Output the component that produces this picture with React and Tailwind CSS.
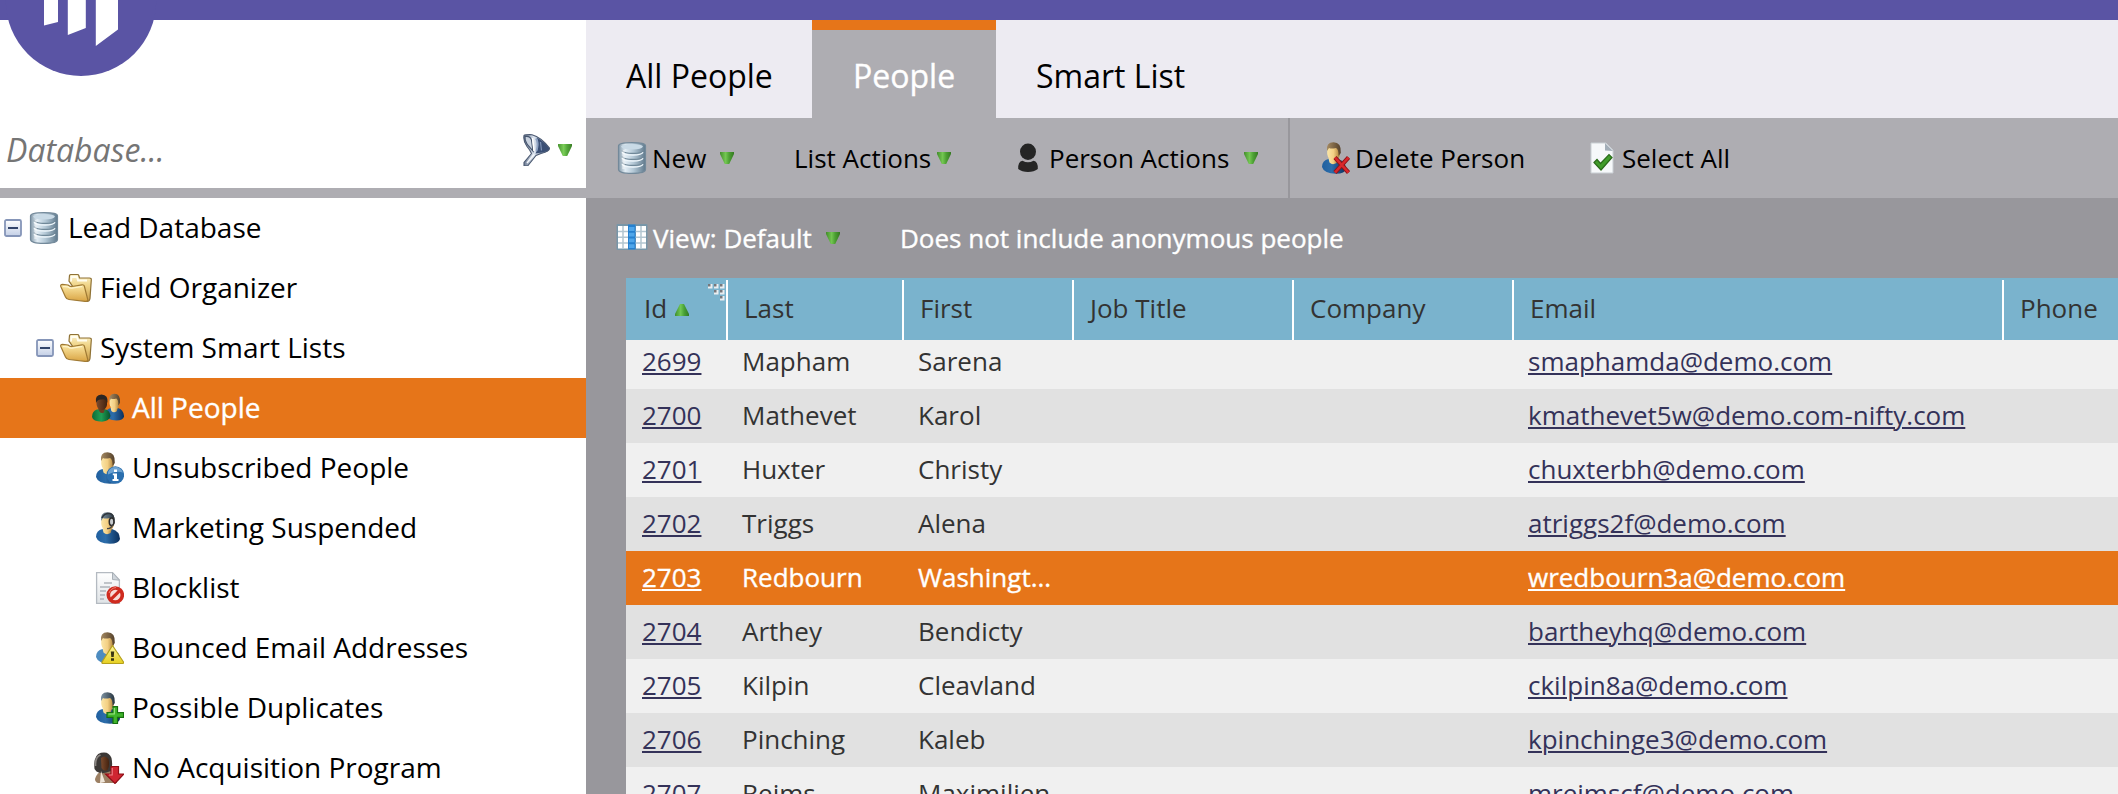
import React from "react";

/* ---------- gradients shared by every icon ---------- */
function Gradients() {
  const lin = (id, stops, v) => (
    <linearGradient id={id} x1="0" y1="0" x2={v ? "0" : "1"} y2={v ? "1" : "0"}>
      {stops.map(([o, c]) => (
        <stop key={o} offset={o} stopColor={c} />
      ))}
    </linearGradient>
  );
  return (
    <svg className="absolute h-0 w-0" aria-hidden="true">
      <defs>
        {lin("gSteel", [[0, "#8297a7"], [0.25, "#e2edf5"], [0.55, "#b4c8d6"], [1, "#5f798c"]])}
        {lin("gGreen", [[0, "#3a8c20"], [0.4, "#6fc94a"], [0.65, "#45a029"], [1, "#2b7515"]])}
        {lin("gBox", [[0, "#ffffff"], [1, "#c3cfe6"]], true)}
        {lin("gFolder", [[0, "#fdeba8"], [1, "#d9a443"]], true)}
        {lin("gFolderBack", [[0, "#fbf1cb"], [0.4, "#f0d588"], [1, "#c99a45"]], true)}
        {lin("gBlue", [[0, "#1f5f9f"], [0.4, "#2c6daa"], [1, "#0b2f5c"]])}
        {lin("gEmerald", [[0, "#0c6a36"], [0.5, "#1fa055"], [1, "#07502a"]])}
        {lin("gSkin", [[0, "#fbe6a8"], [0.5, "#f3cf83"], [1, "#a97c35"]])}
        {lin("gBrown", [[0, "#7c4a2c"], [1, "#43220f"]])}
        {lin("gHair", [[0, "#a58a62"], [1, "#54402a"]])}
        {lin("gHairGrey", [[0, "#8095a4"], [1, "#26333e"]])}
        {lin("gFunnel", [[0, "#6b7a92"], [0.4, "#dfe7f2"], [1, "#3b4f73"]])}
        {lin("gPage", [[0, "#ffffff"], [1, "#dfe3e6"]], true)}
        {lin("gYellow", [[0, "#fdf6a0"], [1, "#e6cf1f"]], true)}
      </defs>
    </svg>
  );
}

/* ---------- icons ---------- */
function Icon({ children, className = "h-8 w-8" }) {
  return (
    <svg viewBox="0 0 32 32" className={"shrink-0 " + className} aria-hidden="true">
      {children}
    </svg>
  );
}

function DatabaseIcon() {
  return (
    <Icon>
      <path d="M2.500 4Q2.500 0.600 16 0.600T29.500 4V27.500Q29.500 31.400 16 31.400T2.500 27.500Z" fill="url(#gSteel)" stroke="#73899a" strokeWidth="1.200" />
      <path d="M5 4.500Q6 2 16 2T27 4.500Q26 7.500 16 7.500T5 4.500Z" fill="#c9dae6" />
      {[8.500, 14.500, 20.500].map((y) => (
        <g key={y} fill="none">
          <path d={`M6 ${y}Q8 ${y + 3} 17 ${y + 3}T28 ${y}`} stroke="#708898" strokeWidth="1.300" />
          <path d={`M6 ${y + 1.6}Q8 ${y + 4.500} 17 ${y + 4.500}T27 ${y + 1.8}`} stroke="#eef6fb" strokeWidth="1.300" />
        </g>
      ))}
      <path d="M7.500 8V27" stroke="#fff" strokeOpacity=".5" strokeWidth="2.500" />
    </Icon>
  );
}

function FolderIcon() {
  return (
    <Icon>
      <path d="M9 9L9.500 3.500Q9.800 2.500 11 2.500H17.500Q18.500 2.500 18.800 3.500L19.500 6H29.500Q31.500 6 31.300 8L30 26.500Q29.500 29.500 27 29.500L22 28Z" fill="url(#gFolderBack)" stroke="#8f7236" strokeWidth="1.200" />
      <path d="M11 9.500L11.500 5H17L18 8.500H27" stroke="#fffdf0" strokeWidth="1.800" fill="none" />
      <path d="M0.800 14.500Q0.300 12.300 2.500 12.300L8 13Q10 15 12 14.500L22 12.800Q23.800 12.500 24.300 14L28 28.500Q27 29.500 25 29.300L9 27.500Q6.500 27.300 5.500 25Z" fill="url(#gFolder)" stroke="#a07a34" strokeWidth="1.200" />
      <path d="M3 14.500L8 14.800Q10 16.500 12 16.100L22 14.500" stroke="#fff6cf" strokeWidth="1.200" fill="none" />
    </Icon>
  );
}

function Person({ hair = "url(#gHair)", skin = "url(#gSkin)", body = "url(#gBlue)" }) {
  return (
    <g>
      <path d="M4 25Q4 18.500 10.500 17L20 17Q27.500 19 28 27Q27 31.600 18 31.800Q6 31.500 4 25Z" fill={body} />
      <path d="M10.500 16.500L20 16.500L18.500 21Q14.500 23.500 11.500 20.500Z" fill={skin} />
      <path d="M9.200 8Q9 3 15 3T22 8V12Q21 18.500 16 19Q10 18 9.200 12Z" fill={skin} />
      <path d="M9 9Q7.800 0.300 15.500 0.200Q23.500 0.200 22.800 11L20.500 14Q20.800 7.500 18 6Q13 7.200 11 6Z" fill={hair} />
    </g>
  );
}

function PeopleIcon() {
  return (
    <Icon>
      <g transform="translate(10.500 1.500) scale(.77 .85)">
        <Person />
      </g>
      <path d="M0 25Q0 19 5 17.500L12 17Q18 18 18.500 24Q17.500 29 10 29.700Q1 29.500 0 25Z" fill="url(#gEmerald)" />
      <path d="M6 16.500L13 16L12 20.500Q9 22 7.500 19.500Z" fill="#6b3d22" />
      <path d="M4.500 9Q4.500 4 9.500 4T15 9V13Q14 18 9.500 18.300Q5 17.500 4.500 12Z" fill="url(#gBrown)" />
      <path d="M4 11Q2.500 3 9.500 2.600Q16.500 3 15.500 11Q14 6.500 9.500 7.500Q5.500 7 4 11Z" fill="#2a2624" />
    </Icon>
  );
}

function UnsubscribedIcon() {
  return (
    <Icon>
      <Person />
      <circle cx="23.300" cy="23" r="8.800" fill="#2b6fae" />
      <path d="M16 20Q18.500 15 23.500 15T31 20.500Q23 18.500 16 22.500Z" fill="#7fb0da" fillOpacity=".8" />
      <path d="M22 17.500H25V20H22ZM20.800 21.500H25V27H26.500V29H20.500V27H22V23.300H20.800Z" fill="#fff" />
    </Icon>
  );
}

function SuspendedIcon() {
  return (
    <Icon>
      <Person hair="url(#gHairGrey)" />
      <path d="M10 6Q12 1 18 1.500Q22 3 21.500 8" stroke="#30373d" strokeWidth="1.600" fill="none" />
      <ellipse cx="19.600" cy="9.800" rx="2.300" ry="3.800" fill="#c9cdd0" stroke="#2b2b2b" strokeWidth="1.500" />
      <path d="M20.500 13Q19 17 15 16.500" stroke="#444" strokeWidth="1.300" fill="none" />
    </Icon>
  );
}

function PageShape() {
  return (
    <g>
      <path d="M4.600 0.600H20.500L27.400 8V31.400H4.600Z" fill="url(#gPage)" stroke="#b4bac1" strokeWidth="1.300" />
      <path d="M20.500 0.600V7.500L27.400 8.200Z" fill="#cfd5db" stroke="#a9b0b7" strokeWidth="1" />
    </g>
  );
}

function BlocklistIcon() {
  return (
    <Icon>
      <PageShape />
      <path d="M12 11H20M8 15H18M8 19H14M8 23H13M8 27H12" stroke="#aeb4ba" strokeWidth="1.400" />
      <circle cx="23.300" cy="23" r="7" fill="#f7dcd8" stroke="#cf2b1f" strokeWidth="3.600" />
      <path d="M18.600 27.700L28 18.300" stroke="#cf2b1f" strokeWidth="3.200" />
      <path d="M17 21Q19 16 24 15.500" stroke="#ee7d70" strokeWidth="1" fill="none" />
    </Icon>
  );
}

function BouncedIcon() {
  return (
    <Icon>
      <Person body="#4d8cc0" />
      <path d="M20.500 13.500L31.500 30Q31.800 31.500 30.500 31.500H11Q9.600 31.500 10 30Z" fill="url(#gYellow)" stroke="#b5a01c" strokeWidth="1.200" strokeLinejoin="round" />
      <path d="M18.800 19.500H22.200L21.700 25H19.300ZM19 26.300H22V28.800H19Z" fill="#3a3713" />
    </Icon>
  );
}

function DuplicatesIcon() {
  return (
    <Icon>
      <Person hair="url(#gHairGrey)" />
      <path d="M21 14.600H25.500V20.700H31.500V25.300H25.500V31.500H21V25.300H15V20.700H21Z" fill="#3fb52b" stroke="#17700f" strokeWidth="1.200" />
      <path d="M22.300 16V22H16.500" stroke="#9be886" strokeWidth="1.100" fill="none" />
    </Icon>
  );
}

function NoAcquisitionIcon() {
  return (
    <Icon>
      <path d="M3 27Q5 20 11 19L20 19Q25 22 25 31H6Q3 30 3 27Z" fill="#9c8064" />
      <path d="M2.500 17Q1 3 9 0.800Q17 -1 19.500 6Q21 14 19 19Q10 23 4.500 19.500Z" fill="#3c3836" />
      <path d="M9 6Q13 2.500 16.500 7Q18 14 15.500 18Q12 20 9.500 16Z" fill="url(#gBrown)" />
      <path d="M3.500 14Q3 5 8.500 3" stroke="#8b8683" strokeWidth="1.800" fill="none" />
      <path d="M9 19L13 30L8 31Z" fill="#efe6da" />
      <path d="M19 14.500H26.500V22H32L23 31.500L13.500 22H19Z" fill="#cf2631" stroke="#8f0f17" strokeWidth="1.200" />
      <path d="M20.200 16V23H17" stroke="#f08288" strokeWidth="1.100" fill="none" />
    </Icon>
  );
}

function DeletePersonIcon() {
  return (
    <Icon>
      <Person />
      <path d="M17 15.500L30.500 30.500M30.500 15.500L17 30.500" stroke="#8d1318" strokeWidth="4.200" />
      <path d="M17 15.500L30.500 30.500M30.500 15.500L17 30.500" stroke="#d9272b" strokeWidth="2.600" />
    </Icon>
  );
}

function SelectAllIcon() {
  return (
    <Icon>
      <path d="M5 1H20L27 8V31H5Z" fill="#f6f8fa" stroke="#c9cfd4" strokeWidth="1" />
      <path d="M19 1V8.500L27 9Z" fill="#a3aeb8" />
      <path d="M8 20.500L11 17.500L14.500 21.500L23 12.500L26 15.500L15 28Z" fill="#419c2b" stroke="#2a6b1a" strokeWidth="1.200" />
    </Icon>
  );
}

function SilhouetteIcon() {
  return (
    <Icon>
      <ellipse cx="16" cy="9.800" rx="8" ry="8.200" fill="#252525" />
      <path d="M6.200 27Q5.800 19.500 10.500 18.700Q16 22 21.500 18.700Q26.200 19.500 25.800 27Q22 30 16 30T6.200 27Z" fill="#252525" />
    </Icon>
  );
}

function ColumnsIcon() {
  return (
    <Icon>
      <rect x="0.500" y="2" width="31" height="26" rx="1" fill="#7896a8" />
      <path d="M2 4H12V26.500H2ZM20 4H30V26.500H20Z" fill="#ffffff" />
      <path d="M2 9.500H30M2 15.300H30M2 21H30M7 4V26.500M25 4V26.500" stroke="#b3c6d1" strokeWidth="1.500" />
      <rect x="12" y="2.500" width="7.500" height="25" fill="#2580cf" />
      <path d="M13 5H18.500V9H13ZM13 10.800H18.500V14.500H13ZM13 16.500H18.500V20.200H13ZM13 22.200H18.500V26H13Z" fill="#4fa6ea" />
    </Icon>
  );
}

function FunnelIcon() {
  return (
    <Icon>
      <path d="M5 1.500Q6 0.500 13 0.700Q22 3 30.500 14Q31 17.500 22 19.500L17 21.500L9 31.500L5 31.800L5 28.500L12.500 19.500Q11 16 8 12.500Q4 7 5 1.500Z" fill="url(#gFunnel)" stroke="#4a5870" strokeWidth="1.100" />
      <path d="M18 3.500Q25.500 8 30 14.500Q29 17 23 18.500L16.500 19.500Q21 12 18 3.500Z" fill="#3a4f75" />
      <path d="M17 4.500Q20 9 17.500 17" stroke="#8fa3c4" strokeWidth="1.800" fill="none" />
      <path d="M21.500 8L22.500 16.500" stroke="#7d92b5" strokeWidth="1.200" fill="none" />
      <path d="M6 2.500Q11 1.500 12.500 6L14 17Q9.500 12 7.800 9.500Q5.500 6 6 2.500Z" fill="#c9d2df" stroke="#46566f" strokeWidth="1.200" />
      <path d="M13.500 4L15 17" stroke="#ffffff" strokeWidth="1.500" />
      <path d="M8 29L15 20.500" stroke="#f3f6fa" strokeWidth="1.400" />
    </Icon>
  );
}

function Caret({ up = false }) {
  return (
    <svg viewBox="0 0 14 12" className="h-3 w-3.5 shrink-0" aria-hidden="true">
      {up ? (
        <path d="M5 0H9L14 10V12H0V10Z" fill="url(#gGreen)" fillOpacity=".92" />
      ) : (
        <path d="M0 0H14V2L9.200 12H4.800L0 2Z" fill="url(#gGreen)" fillOpacity=".92" />
      )}
    </svg>
  );
}

function Toggle() {
  return (
    <svg viewBox="0 0 18 18" className="h-[18px] w-[18px] shrink-0" aria-hidden="true">
      <rect x="1" y="1" width="16" height="16" rx="1.500" fill="url(#gBox)" stroke="#8595b8" strokeWidth="1.800" />
      <path d="M4 9H14" stroke="#33456b" strokeWidth="2" />
    </svg>
  );
}

function Logo() {
  return (
    <svg viewBox="0 0 160 80" className="absolute left-0 top-0 h-20 w-40" aria-hidden="true">
      <circle cx="81" cy="0.800" r="75.200" fill="#5a54a4" />
      <path d="M44 0H58V22L44 25.600ZM67.800 0H85.800V28L67.800 35ZM95.800 0H118V29.500L95.800 46Z" fill="#fff" />
    </svg>
  );
}

/* ---------- data ---------- */
const tree = [
  { label: "Lead Database", icon: DatabaseIcon, pad: "pl-1", toggle: true },
  { label: "Field Organizer", icon: FolderIcon, pad: "pl-[60px]" },
  { label: "System Smart Lists", icon: FolderIcon, pad: "pl-9", toggle: true },
  { label: "All People", icon: PeopleIcon, pad: "pl-[92px]", active: true },
  { label: "Unsubscribed People", icon: UnsubscribedIcon, pad: "pl-[92px]" },
  { label: "Marketing Suspended", icon: SuspendedIcon, pad: "pl-[92px]" },
  { label: "Blocklist", icon: BlocklistIcon, pad: "pl-[92px]" },
  { label: "Bounced Email Addresses", icon: BouncedIcon, pad: "pl-[92px]" },
  { label: "Possible Duplicates", icon: DuplicatesIcon, pad: "pl-[92px]" },
  { label: "No Acquisition Program", icon: NoAcquisitionIcon, pad: "pl-[92px]" },
];

const rows = [
  ["2699", "Mapham", "Sarena", "smaphamda@demo.com"],
  ["2700", "Mathevet", "Karol", "kmathevet5w@demo.com-nifty.com"],
  ["2701", "Huxter", "Christy", "chuxterbh@demo.com"],
  ["2702", "Triggs", "Alena", "atriggs2f@demo.com"],
  ["2703", "Redbourn", "Washingt...", "wredbourn3a@demo.com"],
  ["2704", "Arthey", "Bendicty", "bartheyhq@demo.com"],
  ["2705", "Kilpin", "Cleavland", "ckilpin8a@demo.com"],
  ["2706", "Pinching", "Kaleb", "kpinchinge3@demo.com"],
  ["2707", "Reims", "Maximilien", "mreimscf@demo.com"],
];

const gridCols = "grid grid-cols-[102px_176px_170px_220px_220px_490px_1fr]";
const whiteText = "text-white [-webkit-text-stroke:0.35px_white]";

/* ---------- sections ---------- */
function Sidebar() {
  return (
    <aside className="flex w-[586px] shrink-0 flex-col bg-white">
      <div className="flex h-[168px] shrink-0 items-end pb-[18px] pl-1.5 pr-3.5">
        <span className="grow text-[32px] italic leading-[40px] text-[#757575]">Database...</span>
        <span className="flex h-10 items-center gap-[7px]">
          <FunnelIcon />
          <Caret />
        </span>
      </div>
      <div className="h-2.5 shrink-0 bg-[#aeadb2]" />
      <ul>
        {tree.map(({ label, icon: I, pad, toggle, active }) => (
          <li
            key={label}
            className={`flex h-[60px] items-center whitespace-nowrap text-[28px] leading-none ${pad} ${
              active ? `bg-[#e67519] ${whiteText}` : "text-black"
            }`}
          >
            {toggle && (
              <span className="mr-1.5">
                <Toggle />
              </span>
            )}
            <I />
            <span className="pb-0.5 pl-2">{label}</span>
          </li>
        ))}
      </ul>
    </aside>
  );
}

function Tabs() {
  return (
    <nav className="flex h-[98px] shrink-0 bg-[#edebf2] text-[32px] leading-[44px]">
      <span className="w-[226px] pl-10 pt-[34px]">All People</span>
      <span className={`w-[184px] border-t-10 border-[#e67519] bg-[#aeadb2] pl-[41px] pt-6 ${whiteText}`}>People</span>
      <span className="pl-10 pt-[34px]">Smart List</span>
    </nav>
  );
}

function Toolbar() {
  return (
    <div className="flex h-20 shrink-0 items-center whitespace-nowrap bg-[#aeadb2] text-[26px] leading-[36px]">
      <div className="flex h-full w-[704px] shrink-0 items-center border-r-2 border-[#98979c] pl-[30px]">
        <div className="flex w-[178px] items-center">
          <DatabaseIcon />
          <span className="pl-1">New</span>
          <span className="ml-3.5">
            <Caret />
          </span>
        </div>
        <div className="flex w-[218px] items-center">
          <span>List Actions</span>
          <span className="ml-1.5">
            <Caret />
          </span>
        </div>
        <div className="flex items-center">
          <SilhouetteIcon />
          <span className="pl-[5px]">Person Actions</span>
          <span className="ml-[15px]">
            <Caret />
          </span>
        </div>
      </div>
      <div className="flex w-[268px] items-center pl-7">
        <DeletePersonIcon />
        <span className="pl-[5px]">Delete Person</span>
      </div>
      <div className="flex items-center pl-7">
        <SelectAllIcon />
        <span className="pl-1">Select All</span>
      </div>
    </div>
  );
}

function ViewBar() {
  return (
    <div className={`flex h-20 shrink-0 items-center whitespace-nowrap pl-[30px] text-[26px] leading-[36px] ${whiteText}`}>
      <div className="flex w-[284px] items-center">
        <ColumnsIcon />
        <span className="pl-[5px]">View: Default</span>
        <span className="ml-3.5">
          <Caret />
        </span>
      </div>
      <span>Does not include anonymous people</span>
    </div>
  );
}

function HeaderCell({ children, last }) {
  return (
    <div className={`flex items-center pb-1 pl-4 ${last ? "" : "border-r-2 border-white"}`}>{children}</div>
  );
}

function Grip() {
  return (
    <svg viewBox="0 0 18 18" className="absolute right-0 top-1 h-[18px] w-[18px]" aria-hidden="true">
      {[[0, 0], [6, 0], [12, 0], [6, 6], [12, 6], [12, 12]].map(([x, y]) => (
        <g key={`${x}-${y}`}>
          <rect x={x} y={y} width="4.500" height="4.500" fill="#e9eef1" />
          <rect x={x} y={y} width="2.500" height="2.500" fill="#77787c" />
        </g>
      ))}
    </svg>
  );
}

function Table() {
  return (
    <div className="ml-10 flex grow flex-col overflow-hidden text-[26px] leading-[36px] text-[#333]">
      <div className={`${gridCols} relative z-10 h-[62px] shrink-0 bg-[#7ab3cd] pt-0.5`}>
        <div className="relative flex items-center border-r-2 border-white pb-1 pl-[18px]">
          <span>Id</span>
          <span className="ml-2 mt-1">
            <Caret up />
          </span>
          <Grip />
        </div>
        <HeaderCell>Last</HeaderCell>
        <HeaderCell>First</HeaderCell>
        <HeaderCell>Job Title</HeaderCell>
        <HeaderCell>Company</HeaderCell>
        <HeaderCell>Email</HeaderCell>
        <HeaderCell last>Phone</HeaderCell>
      </div>
      <div className="-mt-[5px]">
        {rows.map(([id, lastName, first, email], i) => {
          const on = id === "2703";
          const bg = on ? `bg-[#e67519] ${whiteText}` : i % 2 ? "bg-[#e1e1e1]" : "bg-[#f0f0f0]";
          const link = `underline decoration-2 underline-offset-2 ${on ? "text-white" : "text-[#343259]"}`;
          return (
            <div key={id} className={`${gridCols} h-[54px] items-center whitespace-nowrap pb-0.5 ${bg}`}>
              <span className="pl-4">
                <a className={link}>{id}</a>
              </span>
              <span className="pl-3.5">{lastName}</span>
              <span className="pl-3.5">{first}</span>
              <span />
              <span />
              <span className="pl-3.5">
                <a className={link}>{email}</a>
              </span>
              <span />
            </div>
          );
        })}
      </div>
    </div>
  );
}

export default function App() {
  return (
    <div className="relative flex h-[794px] w-[2118px] flex-col overflow-hidden bg-white font-['Open_Sans',sans-serif] text-black">
      <Gradients />
      <header className="h-5 shrink-0 bg-[#5a54a4]" />
      <Logo />
      <div className="flex min-h-0 grow">
        <Sidebar />
        <main className="flex min-w-0 grow flex-col overflow-hidden bg-[#98979c]">
          <Tabs />
          <Toolbar />
          <ViewBar />
          <Table />
        </main>
      </div>
    </div>
  );
}
